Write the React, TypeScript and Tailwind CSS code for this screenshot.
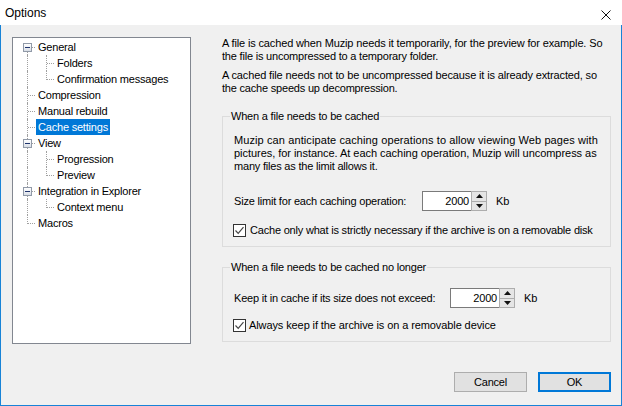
import React from "react";

type Conn = "full" | "top" | "bottom" | "none";

function Cell({ w, v, h, box }: { w: string; v: Conn; h?: boolean; box?: boolean }) {
  return (
    <div className={`relative h-full shrink-0 ${w}`}>
      {v === "full" && <div className="absolute left-[8px] top-0 bottom-0 border-l border-dotted border-[#a0a0a0]" />}
      {v === "top" && <div className="absolute left-[8px] top-0 h-[9px] border-l border-dotted border-[#a0a0a0]" />}
      {v === "bottom" && <div className="absolute left-[8px] top-[8px] bottom-0 border-l border-dotted border-[#a0a0a0]" />}
      {h && <div className="absolute left-[9px] right-0 top-[8px] border-t border-dotted border-[#a0a0a0]" />}
      {box && (
        <div className="absolute left-[4px] top-[4px] w-[9px] h-[9px] border border-[#919aa8] bg-gradient-to-b from-white to-[#d9dee6] flex items-center justify-center">
          <div className="w-[5px] h-[1px] bg-[#20356e]" />
        </div>
      )}
    </div>
  );
}

type Row = { label: string; level: 0 | 1; c0: Conn; c1?: Conn; box?: boolean; sel?: boolean };

const rows: Row[] = [
  { label: "General", level: 0, c0: "bottom", box: true },
  { label: "Folders", level: 1, c0: "full", c1: "full" },
  { label: "Confirmation messages", level: 1, c0: "full", c1: "top" },
  { label: "Compression", level: 0, c0: "full" },
  { label: "Manual rebuild", level: 0, c0: "full" },
  { label: "Cache settings", level: 0, c0: "full", sel: true },
  { label: "View", level: 0, c0: "full", box: true },
  { label: "Progression", level: 1, c0: "full", c1: "full" },
  { label: "Preview", level: 1, c0: "full", c1: "top" },
  { label: "Integration in Explorer", level: 0, c0: "full", box: true },
  { label: "Context menu", level: 1, c0: "full", c1: "top" },
  { label: "Macros", level: 0, c0: "top" },
];

function SpinBox() {
  return (
    <div className="flex h-[20px] w-[65px] border border-[#7a7a7a] bg-white">
      <div className="flex-1 flex items-center justify-end pr-[2px] leading-[13px]">2000</div>
      <div className="w-[16px] flex flex-col border-l border-[#adadad] bg-[#e5e5e5] -my-[1px] -mr-[1px] border-r border-t border-b">
        <div className="flex-1 flex items-center justify-center border-b border-[#adadad]">
          <svg width="7" height="4" viewBox="0 0 7 4"><path d="M3.5 0 L7 4 L0 4 Z" fill="#111" /></svg>
        </div>
        <div className="flex-1 flex items-center justify-center">
          <svg width="7" height="4" viewBox="0 0 7 4"><path d="M0 0 L7 0 L3.5 4 Z" fill="#111" /></svg>
        </div>
      </div>
    </div>
  );
}

function Check() {
  return (
    <div className="w-[13px] h-[13px] border border-[#333333] bg-white -ml-[1px] shrink-0 flex items-center justify-center">
      <svg width="11" height="11" viewBox="0 0 11 11">
        <path d="M1.5 5.5 L4.2 8.3 L9.5 2.2" fill="none" stroke="#444" strokeWidth="1.2" />
      </svg>
    </div>
  );
}

export default function App() {
  const font = "font-['Liberation_Sans',Arial,sans-serif]";
  return (
    <div className={`w-[622px] h-[406px] flex flex-col text-[11px] text-black tracking-[-0.2px] ${font}`}>
      <div className="h-[25px] bg-white flex items-center justify-between shrink-0">
        <span className="pl-[5px] text-[12px] tracking-normal leading-[14px] pt-[1px]">Options</span>
        <svg className="mr-[11px] mt-[4px]" width="10" height="10" viewBox="0 0 10 10">
          <path d="M0.5 0.5 L9.5 9.5 M9.5 0.5 L0.5 9.5" stroke="#111" strokeWidth="1" />
        </svg>
      </div>
      <div className="flex-1 flex bg-[#f0f0f0] border-l border-r border-b border-[#1883d7] pl-[11px] pt-[12px]">
        <div className="w-[179px] h-[307px] border border-[#828790] bg-white pt-[1px] shrink-0">
          {rows.map((r, i) => (
            <div key={i} className="h-[16px] flex pl-[6px]">
              {r.level === 0 ? (
                <Cell w="w-[16px]" v={r.c0} h={true} box={r.box} />
              ) : (
                <>
                  <Cell w="w-[19px]" v={r.c0} />
                  <Cell w="w-[16px]" v={r.c1 ?? "none"} h={true} />
                </>
              )}
              <div
                className={`ml-[1px] px-[2px] h-full flex items-center whitespace-nowrap ${
                  r.sel ? "bg-[#0078d7] text-white" : ""
                }`}
              >
                {r.label}
              </div>
            </div>
          ))}
        </div>
        <div className="ml-[31px] w-[389px] flex flex-col">
          <p className="leading-[13px] whitespace-nowrap">
            <span className="tracking-[-0.14px]">
              A file is cached when Muzip needs it temporarily, for the preview for example. So
            </span>
            <br />
            the file is uncompressed to a temporary folder.
          </p>
          <p className="mt-[6px] leading-[13px] whitespace-nowrap">
            <span className="tracking-[-0.14px]">
              A cached file needs not to be uncompressed because it is already extracted, so
            </span>
            <br />
            the cache speeds up decompression.
          </p>
          <div className="relative mt-[21px] border border-[#dcdcdc] pl-[11px] pt-[17px] pb-[9px]">
            <span className="absolute top-[-7px] left-[7px] bg-[#f0f0f0] px-[1px] leading-[13px] whitespace-nowrap">
              When a file needs to be cached
            </span>
            <p className="leading-[13px] whitespace-nowrap">
              <span className="tracking-[0.1px]">
                Muzip can anticipate caching operations to allow viewing Web pages with
              </span>
              <br />
              <span className="tracking-[-0.04px]">
                pictures, for instance. At each caching operation, Muzip will uncompress as
              </span>
              <br />
              many files as the limit allows it.
            </p>
            <div className="mt-[18px] flex items-center h-[20px]">
              <div className="w-[188px] whitespace-nowrap">Size limit for each caching operation:</div>
              <SpinBox />
              <div className="ml-[9px]">Kb</div>
            </div>
            <div className="mt-[13px] flex items-center h-[13px]">
              <Check />
              <span className="ml-[4px] whitespace-nowrap">
                Cache only what is strictly necessary if the archive is on a removable disk
              </span>
            </div>
          </div>
          <div className="relative mt-[20px] border border-[#dcdcdc] pl-[11px] pt-[20px] pb-[9px]">
            <span className="absolute top-[-7px] left-[7px] bg-[#f0f0f0] px-[1px] leading-[13px] whitespace-nowrap">
              When a file needs to be cached no longer
            </span>
            <div className="flex items-center h-[20px]">
              <div className="w-[216px] whitespace-nowrap">Keep it in cache if its size does not exceed:</div>
              <SpinBox />
              <div className="ml-[9px]">Kb</div>
            </div>
            <div className="mt-[11px] flex items-center h-[13px]">
              <Check />
              <span className="ml-[3px] whitespace-nowrap tracking-[-0.1px]">
                Always keep if the archive is on a removable device
              </span>
            </div>
          </div>
          <div className="mt-[30px] flex justify-end gap-[11px]">
            <button className="w-[73px] h-[20px] border border-[#adadad] bg-[#e1e1e1] flex items-center justify-center">
              Cancel
            </button>
            <button className="w-[73px] h-[20px] border-2 border-[#0078d7] bg-[#e1e1e1] flex items-center justify-center">
              OK
            </button>
          </div>
        </div>
      </div>
    </div>
  );
}
